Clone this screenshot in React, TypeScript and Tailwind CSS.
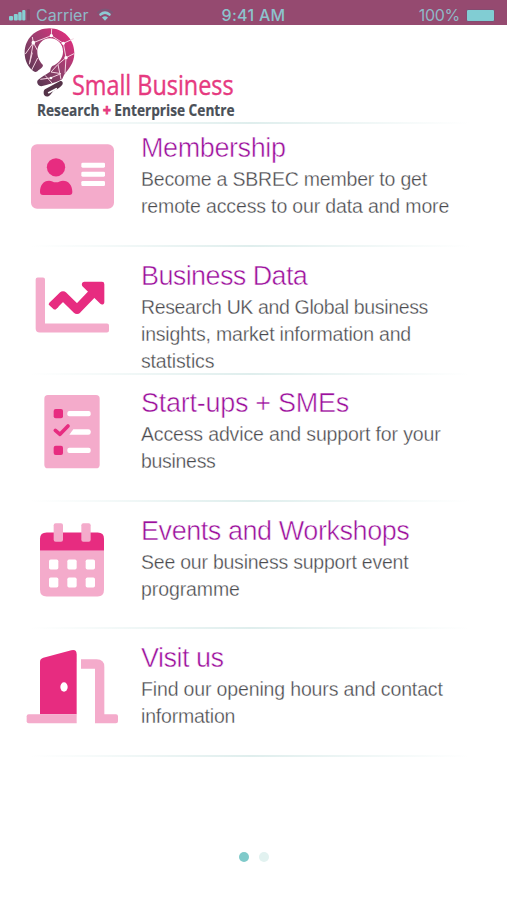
import type { ReactNode } from 'react';

interface MenuItem { title: string; titleClass: string; lines: { text: string; className: string }[]; icon: ReactNode }

const PINK = '#e72c80';
const LIGHT = '#f4abcb';

function MembershipIcon() {
  return (
    <svg viewBox="0 0 330 285" className="w-[110px] h-[95px]">
      <rect x="33" y="43" width="249" height="193" rx="18" fill={LIGHT} />
      <circle cx="108" cy="112" r="27.500" fill={PINK} />
      <path d="M60 186c0-20 10-34 27-34 8 0 12 5 21 5s13-5 21-5c17 0 28 14 28 34 0 6-3 9-9 9H69c-6 0-9-3-9-9z" fill={PINK} />
      {[98, 125, 153].map((y) => <rect key={y} x="184" y={y} width="71" height="15" rx="4" fill="#fff" />)}
    </svg>
  );
}

function ChartIcon() {
  return (
    <svg viewBox="0 -7.5 330 285" className="w-[110px] h-[95px]">
      <path d="M53 51h16q6 0 6 6v132h186q6 0 6 6v15q0 6-6 6H59q-12 0-12-12V57q0-6 6-6z" fill={LIGHT} />
      <path d="M97 137l32-31 42 41 48-50" fill="none" stroke={PINK} strokeWidth="27" strokeLinejoin="round" />
      <path d="M87 129l10-10 19 20-9 7q-3 2-6 0l-13-12q-4-3-1-5z" fill={PINK} />
      <path d="M193 64h53q7 0 7 7v54c0 7-8 9-12 5l-53-52c-5-5-2-14 5-14z" fill={PINK} />
    </svg>
  );
}

function ChecklistIcon() {
  return (
    <svg viewBox="0 0 330 285" className="w-[110px] h-[95px]">
      <rect x="73" y="30" width="166" height="220" rx="11" fill={LIGHT} />
      <rect x="101" y="72" width="28" height="28" rx="6" fill={PINK} />
      <rect x="101" y="182" width="28" height="28" rx="6" fill={PINK} />
      <rect x="142" y="78" width="70" height="16" rx="6" fill="#fff" />
      <path d="M160 133h45q7 0 7 6v4q0 6-7 6h-57z" fill="#fff" />
      <rect x="142" y="188" width="70" height="16" rx="6" fill="#fff" />
      <path d="M106 136l14 12 24-25" fill="none" stroke={PINK} strokeWidth="11" strokeLinecap="round" strokeLinejoin="round" />
    </svg>
  );
}

function CalendarIcon() {
  return (
    <svg viewBox="0 -7.5 330 285" className="w-[110px] h-[95px]">
      <path d="M80 51h153q19 0 19 19v36H60V70q0-19 20-19z" fill={PINK} />
      <path d="M60 106h192v117q0 20-19 20H80q-20 0-20-20z" fill={LIGHT} />
      <rect x="101" y="23" width="28" height="56" rx="6" fill={LIGHT} />
      <rect x="184" y="23" width="28" height="56" rx="6" fill={LIGHT} />
      {[132, 186].map((y) => [87, 142, 197].map((x) => (
        <rect key={`${x}-${y}`} x={x} y={y} width="28" height="30" rx="5" fill="#fff" />
      )))}
    </svg>
  );
}

function DoorIcon() {
  return (
    <svg viewBox="0 0 330 285" className="w-[110px] h-[95px]">
      <path d="M60 223V66q0-10 10-13l84-22q16-4 16 12v180z" fill={PINK} />
      <ellipse cx="132" cy="141" rx="11" ry="14" fill="#fff" />
      <path d="M26 223h144v27H26q-6 0-6-6v-15q0-6 6-6z" fill={LIGHT} />
      <path d="M183 58h47q23 0 23 23v142h35q6 0 6 6v15q0 6-6 6h-63V86h-42z" fill={LIGHT} />
    </svg>
  );
}

function BulbLogo() {
  return (
    <svg viewBox="0 0 240 240" className="w-[80px] h-[80px] shrink-0">
      <defs>
        <linearGradient id="bulb" x1="175" y1="60" x2="50" y2="170" gradientUnits="userSpaceOnUse">
          <stop offset="0" stopColor="#d9307c" />
          <stop offset="0.5" stopColor="#98406f" />
          <stop offset="1" stopColor="#583550" />
        </linearGradient>
      </defs>
      <path d="M103 19C146 19 178 52 178 93C178 124 160 142 149 156C143 164 145 171 138 174C120 182 98 188 79 193C69 192 63 180 69 174C80 164 92 158 104 150C108 146 104 141 112 132C132 124 144 108 144 89C144 66 127 49 105 49C83 49 67 67 67 89C67 108 76 121 84 129C84 136 76 141 70 145C66 150 61 151 56 148C39 136 29 115 29 93C29 52 60 19 103 19Z" fill="url(#bulb)" />
      <path d="M90 202L134 178C141 175 146 182 142 188C136 196 128 201 120 204C113 207 109 217 102 222C94 226 86 222 86 214C86 208 86 205 90 202Z" fill="#543348" />
      <path d="M101 212l23-12" stroke="#fff" strokeWidth="5" strokeLinecap="round" />
      <g fill="none" stroke="#f3d3e1" strokeWidth="3">
        <path d="M52 45l3 17 54-21 36 23 31-14M109 41l1-21M55 62L44 122M55 62l13 24M31 96l24-34M52 92l-9 35M68 108l-18 36M145 64l8 43M177 95l-24 12M153 107l-24 20-21 23M153 107l-3 47M129 128l9 44M108 150l30 5M90 160l22 24M76 172l30-4 32-13" />
      </g>
      <g fill="#fff">
        <circle cx="55" cy="62" r="5.500" />
        <circle cx="109" cy="41" r="5" />
        <circle cx="145" cy="64" r="5" />
        <circle cx="153" cy="107" r="5" />
        <circle cx="108" cy="168" r="4" />
      </g>
    </svg>
  );
}

const items: MenuItem[] = [
  {
    title: 'Membership', titleClass: 'tracking-[-0.4px]', icon: <MembershipIcon />,
    lines: [
      { text: 'Become a SBREC member to get', className: 'tracking-[-0.2px]' },
      { text: 'remote access to our data and more', className: 'tracking-[-0.15px]' },
    ],
  },
  {
    title: 'Business Data', titleClass: 'tracking-[-0.6px]', icon: <ChartIcon />,
    lines: [
      { text: 'Research UK and Global business', className: 'tracking-[-0.36px]' },
      { text: 'insights, market information and', className: 'tracking-[-0.2px]' },
      { text: 'statistics', className: 'tracking-[-0.15px]' },
    ],
  },
  {
    title: 'Start-ups + SMEs', titleClass: 'tracking-[-0.27px]', icon: <ChecklistIcon />,
    lines: [
      { text: 'Access advice and support for your', className: 'tracking-[-0.15px]' },
      { text: 'business', className: 'tracking-[-0.3px]' },
    ],
  },
  {
    title: 'Events and Workshops', titleClass: 'tracking-[-0.44px]', icon: <CalendarIcon />,
    lines: [
      { text: 'See our business support event', className: 'tracking-[-0.23px]' },
      { text: 'programme', className: 'tracking-[-0.1px]' },
    ],
  },
  {
    title: 'Visit us', titleClass: 'tracking-[-0.5px]', icon: <DoorIcon />,
    lines: [
      { text: 'Find our opening hours and contact', className: 'tracking-[-0.15px]' },
      { text: 'information', className: 'tracking-[-0.2px]' },
    ],
  },
];

function Divider() {
  return <div className="h-[2px] ml-[30px] mr-[37px] shrink-0 bg-linear-to-r from-transparent via-[#dfeeed] to-transparent" />;
}

function StatusBar() {
  return (
    <header className="grid grid-cols-3 items-center h-[25px] pt-[5px] bg-[#954a70] text-[#8fb9c7] font-['Inter',sans-serif] text-[16px] leading-[20px]">
      <div className="flex items-center pl-[9px]">
        <svg viewBox="0 0 22 14" className="w-[22px] h-[14px]">
          <rect x="0" y="8" width="4" height="4.500" rx="1" fill="#85cfd4" />
          <rect x="4.800" y="6" width="4" height="6.500" rx="1" fill="#85cfd4" />
          <rect x="9.200" y="4" width="3.500" height="8.500" rx="1" fill="#85cfd4" />
          <rect x="13.200" y="2" width="3.200" height="10.500" rx="1" fill="#85cfd4" />
          <rect x="18" y="1" width="3" height="11.500" rx="1" fill="#844366" />
        </svg>
        <span className="ml-[5px]">Carrier</span>
        <svg viewBox="0 0 16 14" className="ml-[9px] w-[16px] h-[14px]" fill="none" strokeLinecap="round">
          <path d="M1 4.500Q8-1.500 15 4.500" stroke="#7d5778" strokeWidth="2" />
          <path d="M3.500 6.500Q8 2.800 12.500 6.500" stroke="#8ccbd3" strokeWidth="2.600" />
          <path d="M5 9.500Q8 7 11 9.500L8 12.800z" fill="#8ccbd3" />
        </svg>
      </div>
      <div className="text-center font-medium text-[#8cc3cd] tracking-[0.3px] whitespace-nowrap">9:41 AM</div>
      <div className="flex items-center justify-end pr-[12px]">
        <span className="tracking-[-0.3px]">100%</span>
        <div className="ml-[6px] w-[29px] h-[13px] rounded-[2px] bg-[#81cdd3] border border-[#844c70]" />
      </div>
    </header>
  );
}

export default function App() {
  return (
    <div className="flex flex-col w-[507px] h-[900px] bg-white overflow-hidden">
      <StatusBar />
      <div className="flex h-[97px] pl-[15px]">
        <div className="-mt-[3px] w-[22px] shrink-0"><BulbLogo /></div>
        <div className="flex flex-col pt-[45px] font-['Open_Sans',sans-serif] whitespace-nowrap">
          <div className="ml-[35px] w-[162px] h-[30px] text-[28px] leading-[28px] text-[#e63a80] [-webkit-text-stroke:0.4px_#e63a80]">
            <span className="inline-block origin-left scale-x-[0.835]">Small Business</span>
          </div>
          <div className="w-[198px] h-[20px] text-[16.500px] leading-[20px] font-bold text-[#4a5058] [-webkit-text-stroke:0.2px_#4a5058]">
            <span className="inline-block origin-left scale-x-[0.828]">Research <span className="text-[#e63a80] [-webkit-text-stroke:1px_#e63a80]">+</span> Enterprise Centre</span>
          </div>
        </div>
      </div>
      <Divider />

      <ul className="-mt-[5px] font-['Liberation_Sans',Arial,sans-serif]">
        {items.map((item) => (
          <li key={item.title} className="flex flex-col h-[127.500px]">
            <div className="flex h-[126px] pl-[20px] pt-[11px]">
              <div className="w-[121px] shrink-0">{item.icon}</div>
              <div className="whitespace-nowrap">
                <h2 className={`h-[36px] text-[27px] leading-[36px] text-[#9c109c] [-webkit-text-stroke:0.5px_white] ${item.titleClass}`}>{item.title}</h2>
                {item.lines.map((line) => (
                  <p key={line.text} className={`h-[27px] text-[19.500px] leading-[27px] text-[#4a4a4e] [-webkit-text-stroke:0.3px_white] ${line.className}`}>{line.text}</p>
                ))}
              </div>
            </div>
            <Divider />
          </li>
        ))}
      </ul>

      <div className="flex justify-center gap-[10px] mt-[95px]">
        <span className="w-[10px] h-[10px] rounded-full bg-[#7fcaca]" />
        <span className="w-[10px] h-[10px] rounded-full bg-[#e2f2f0]" />
      </div>
    </div>
  );
}
